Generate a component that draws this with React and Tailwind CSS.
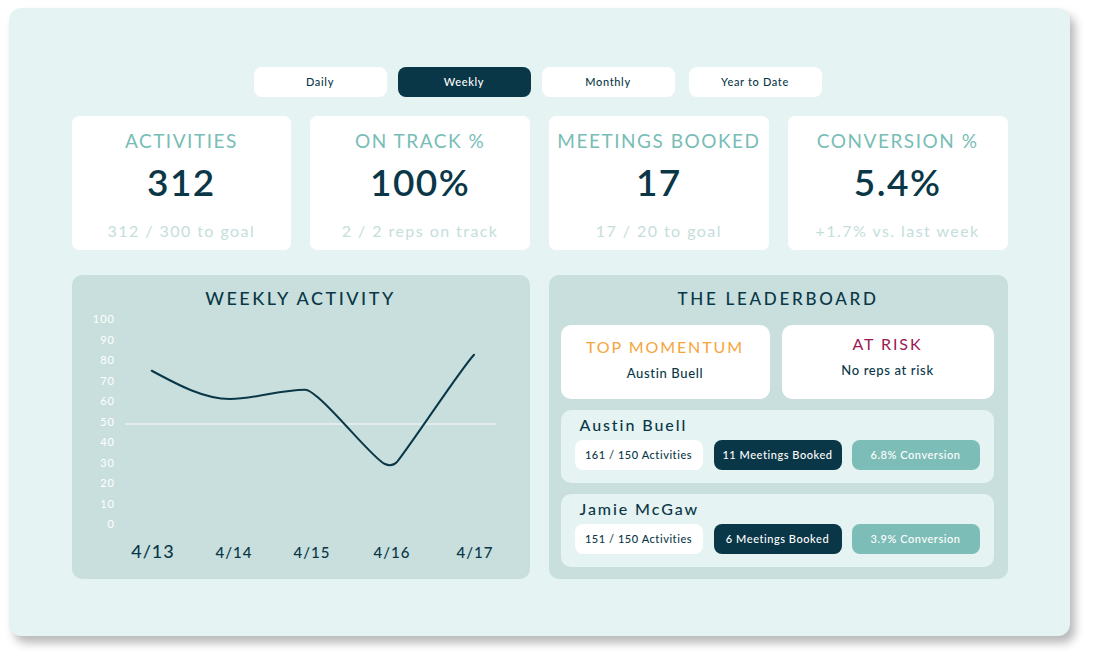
import React from "react";

const tabs = ["Daily", "Weekly", "Monthly", "Year to Date"];

const stats = [
  { label: "ACTIVITIES", value: "312", sub: "312 / 300 to goal" },
  { label: "ON TRACK %", value: "100%", sub: "2 / 2 reps on track" },
  { label: "MEETINGS BOOKED", value: "17", sub: "17 / 20 to goal" },
  { label: "CONVERSION %", value: "5.4%", sub: "+1.7% vs. last week" },
];

const reps = [
  { name: "Austin Buell", acts: "161 / 150 Activities", meet: "11 Meetings Booked", conv: "6.8% Conversion" },
  { name: "Jamie McGaw", acts: "151 / 150 Activities", meet: "6 Meetings Booked", conv: "3.9% Conversion" },
];

const yTicks = [100, 90, 80, 70, 60, 50, 40, 30, 20, 10, 0];
const xLabels = [
  { t: "4/13", x: 81, big: true },
  { t: "4/14", x: 162 },
  { t: "4/15", x: 240 },
  { t: "4/16", x: 320 },
  { t: "4/17", x: 403 },
];

function ActivityChart() {
  return (
    <svg width="458" height="262" viewBox="0 0 458 262" className="mt-[2px] block">
      {yTicks.map((v) => (
        <text
          key={v}
          x="43"
          y={212 - v * 2.05 + 4}
          textAnchor="end"
          fontSize="11"
          fill="#ffffff"
          letterSpacing="1"
        >
          {v}
        </text>
      ))}
      <line x1="53" y1="112" x2="424" y2="112" stroke="#ffffff" strokeWidth="1" opacity="0.9" />
      <path
        d="M79.7,58.7 C105.8,72.8 131.9,87 158,87 C183,87 208,77.7 233,77.7 C247,77.7 300,147 313,152 C317,154 321,154 325,150 C345,124 388,58 402,42.7"
        fill="none"
        stroke="#0a3747"
        strokeWidth="2"
        strokeLinecap="round"
        strokeLinejoin="round"
      />
      {xLabels.map((l) => (
        <text
          key={l.t}
          x={l.x}
          y="246"
          textAnchor="middle"
          fontSize={l.big ? 18 : 15}
          fill="#0a3747"
          letterSpacing="1"
          fontWeight="500"
        >
          {l.t}
        </text>
      ))}
    </svg>
  );
}

export default function App() {
  return (
    <div className="min-h-[660px] w-[1094px] bg-white pl-[9px] pt-[8px]" style={{ fontFamily: "Lato, 'Noto Sans', sans-serif" }}>
      <div className="flex h-[628px] w-[1061px] flex-col items-center rounded-[12px] bg-[#e5f3f2] pt-[59px] shadow-[5px_7px_10px_rgba(0,0,0,0.28)]">
        {/* period tabs */}
        <div className="ml-[-4px] flex gap-[11px]">
          {tabs.map((t) => (
            <div
              key={t}
              className={
                "flex h-[30px] w-[133px] items-center justify-center rounded-[8px] text-[11px] font-medium tracking-[0.06em] " +
                (t === "Weekly" ? "bg-[#0a3747] text-white" : "bg-white text-[#0a3747]") +
                (t === "Year to Date" ? " ml-[3px]" : "")
              }
            >
              {t}
            </div>
          ))}
        </div>

        {/* stat cards */}
        <div className="mt-[19px] flex w-[936px] gap-[19px]">
          {stats.map((s) => (
            <div key={s.label} className="flex h-[134px] w-[220px] flex-col items-center rounded-[7px] bg-white pt-[12px]">
              <div className="text-[19px] leading-[26px] tracking-[0.08em] text-[#78bdb6]">{s.label}</div>
              <div className="mt-[8px] text-[37px] font-semibold leading-[40px] tracking-[0.04em] text-[#0a3747]">{s.value}</div>
              <div className="mt-[18px] text-[16px] leading-[22px] tracking-[0.09em] text-[#c4dedb]">{s.sub}</div>
            </div>
          ))}
        </div>

        {/* panels */}
        <div className="mt-[25px] flex w-[936px] gap-[19px]">
          <div className="h-[304px] w-[458px] rounded-[10px] bg-[#c8dfdd]">
            <div className="pt-[11px] text-center text-[18px] font-medium leading-[24px] tracking-[0.14em] text-[#0a3747]">
              WEEKLY ACTIVITY
            </div>
            <ActivityChart />
          </div>

          <div className="flex h-[304px] w-[459px] flex-col rounded-[10px] bg-[#c8dfdd] px-[12px]">
            <div className="pt-[12px] text-center text-[17px] font-medium leading-[24px] tracking-[0.16em] text-[#0a3747]">
              THE LEADERBOARD
            </div>
            <div className="mt-[14px] flex gap-[12px]">
              <div className="flex h-[74px] w-[209px] flex-col items-center rounded-[10px] bg-white pt-[12px]">
                <div className="text-[16px] leading-[20px] tracking-[0.12em] text-[#f5a53a]">TOP MOMENTUM</div>
                <div className="mt-[7px] text-[13px] font-medium tracking-[0.05em] text-[#0a3747]">Austin Buell</div>
              </div>
              <div className="flex h-[74px] w-[212px] flex-col items-center rounded-[10px] bg-white pt-[9px]">
                <div className="text-[16px] leading-[20px] tracking-[0.12em] text-[#9a1a52]">AT RISK</div>
                <div className="mt-[7px] text-[13px] font-medium tracking-[0.05em] text-[#0a3747]">No reps at risk</div>
              </div>
            </div>
            <div className="mt-[11px] flex flex-col gap-[11px]">
              {reps.map((r) => (
                <div key={r.name} className="h-[73px] w-[433px] rounded-[10px] bg-[#e5f3f2] px-[14px] pt-[4px]">
                  <div className="pl-[5px] text-[16px] font-medium leading-[22px] tracking-[0.12em] text-[#0a3747]">{r.name}</div>
                  <div className="mt-[4px] flex gap-[11px]">
                    <div className="flex h-[30px] w-[128px] items-center justify-center rounded-[8px] bg-white text-[11px] font-medium tracking-[0.05em] text-[#0a3747]">
                      {r.acts}
                    </div>
                    <div className="flex h-[30px] w-[128px] items-center justify-center rounded-[8px] bg-[#0a3747] text-[11px] font-medium tracking-[0.05em] text-white">
                      {r.meet}
                    </div>
                    <div className="ml-[-1px] flex h-[30px] w-[128px] items-center justify-center rounded-[8px] bg-[#7dbdb7] text-[11px] font-medium tracking-[0.05em] text-white">
                      {r.conv}
                    </div>
                  </div>
                </div>
              ))}
            </div>
          </div>
        </div>
      </div>
    </div>
  );
}
